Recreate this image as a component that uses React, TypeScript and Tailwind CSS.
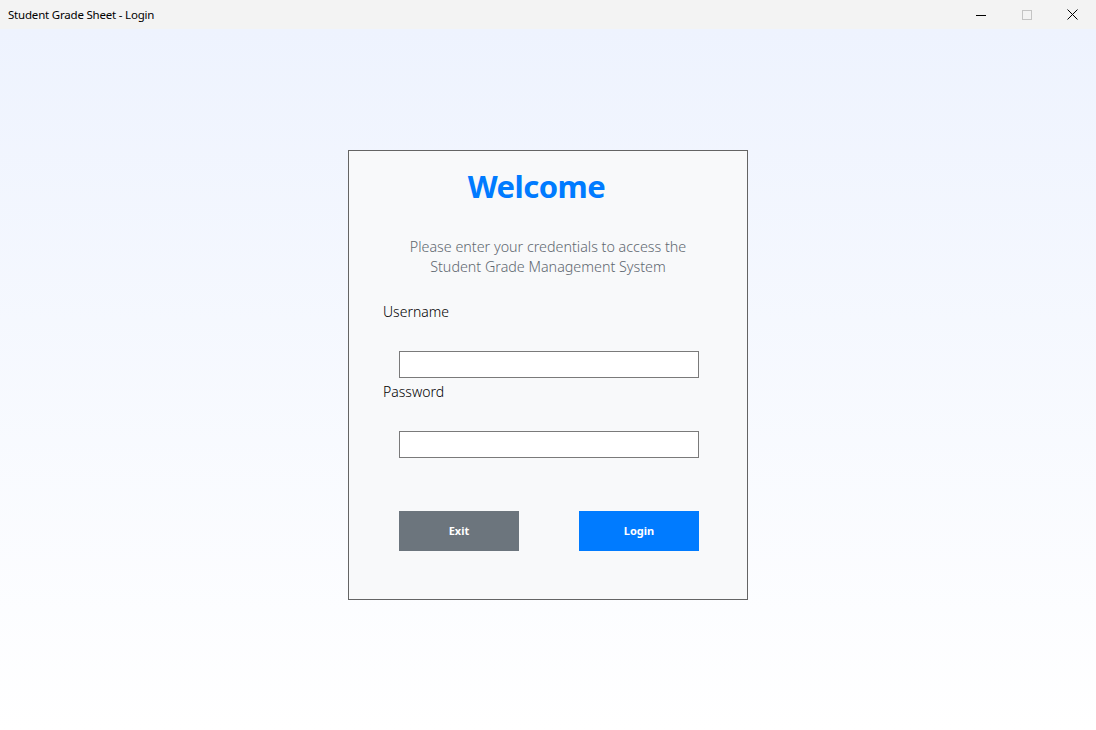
import { useState } from "react";

const uiFont = { fontFamily: '"Noto Sans", "Open Sans", sans-serif' };

function TitleBar() {
  return (
    <div className="h-[29px] flex items-center justify-between bg-[#f3f3f3] shrink-0">
      <span className="pl-2 text-[11.5px] text-black tracking-[-0.2px]" style={uiFont}>
        Student Grade Sheet - Login
      </span>
      <div className="flex h-full pr-[2px]">
        <button className="w-[46px] h-full flex items-center justify-center pl-[3px]">
          <svg width="10" height="10" viewBox="0 0 10 10">
            <path d="M0 5.5h10" stroke="#000" strokeWidth="1" />
          </svg>
        </button>
        <button className="w-[46px] h-full flex items-center justify-center pl-[3px]">
          <svg width="10" height="10" viewBox="0 0 10 10">
            <rect x="0.5" y="0.5" width="9" height="9" fill="none" stroke="#c4c4c4" strokeWidth="1" />
          </svg>
        </button>
        <button className="w-[46px] h-full flex items-center justify-center pl-[3px]">
          <svg width="11" height="11" viewBox="0 0 11 11">
            <path d="M0.5 0.5l10 10M10.5 0.5l-10 10" stroke="#000" strokeWidth="1" />
          </svg>
        </button>
      </div>
    </div>
  );
}

export default function App() {
  const [username, setUsername] = useState("");
  const [password, setPassword] = useState("");

  return (
    <div className="w-[1096px] h-[730px] flex flex-col overflow-hidden" style={uiFont}>
      <TitleBar />
      <div className="flex-1 flex justify-center pt-[121px] bg-gradient-to-b from-[#eef3fe] to-[#ffffff]">
        <div className="w-[400px] h-[450px] border border-[#646464] bg-[#f8f9fa] flex flex-col">
          <h1 className="mt-[15px] h-[40px] leading-[40px] pr-[23px] text-center text-[31px] font-bold text-[#007bff] tracking-[-0.5px]">
            Welcome
          </h1>
          <p className="mt-[31px] text-center text-[14.3px] leading-[20px] font-light text-[#5f6870]">
            Please enter your credentials to access the
            <br />
            Student Grade Management System
          </p>

          <label className="mt-[25px] pl-[34px] text-[14px] leading-[20px] font-light text-black">
            Username
          </label>
          <input
            autoFocus
            value={username}
            onChange={(e) => setUsername(e.target.value)}
            className="mt-[29px] ml-[50px] w-[300px] h-[27px] border border-[#7a7a7a] bg-white px-[2px] text-[13px] outline-none caret-black"
          />

          <label className="mt-[4px] pl-[34px] text-[14px] leading-[20px] font-light text-black">
            Password
          </label>
          <input
            type="password"
            value={password}
            onChange={(e) => setPassword(e.target.value)}
            className="mt-[29px] ml-[50px] w-[300px] h-[27px] border border-[#7a7a7a] bg-white px-[2px] text-[13px] outline-none"
          />

          <div className="mt-[53px] ml-[50px] flex gap-[60px]">
            <button className="w-[120px] h-[40px] bg-[#6c757d] text-white text-[11px] font-bold">
              Exit
            </button>
            <button className="w-[120px] h-[40px] bg-[#007bff] text-white text-[11px] font-bold">
              Login
            </button>
          </div>
        </div>
      </div>
    </div>
  );
}
